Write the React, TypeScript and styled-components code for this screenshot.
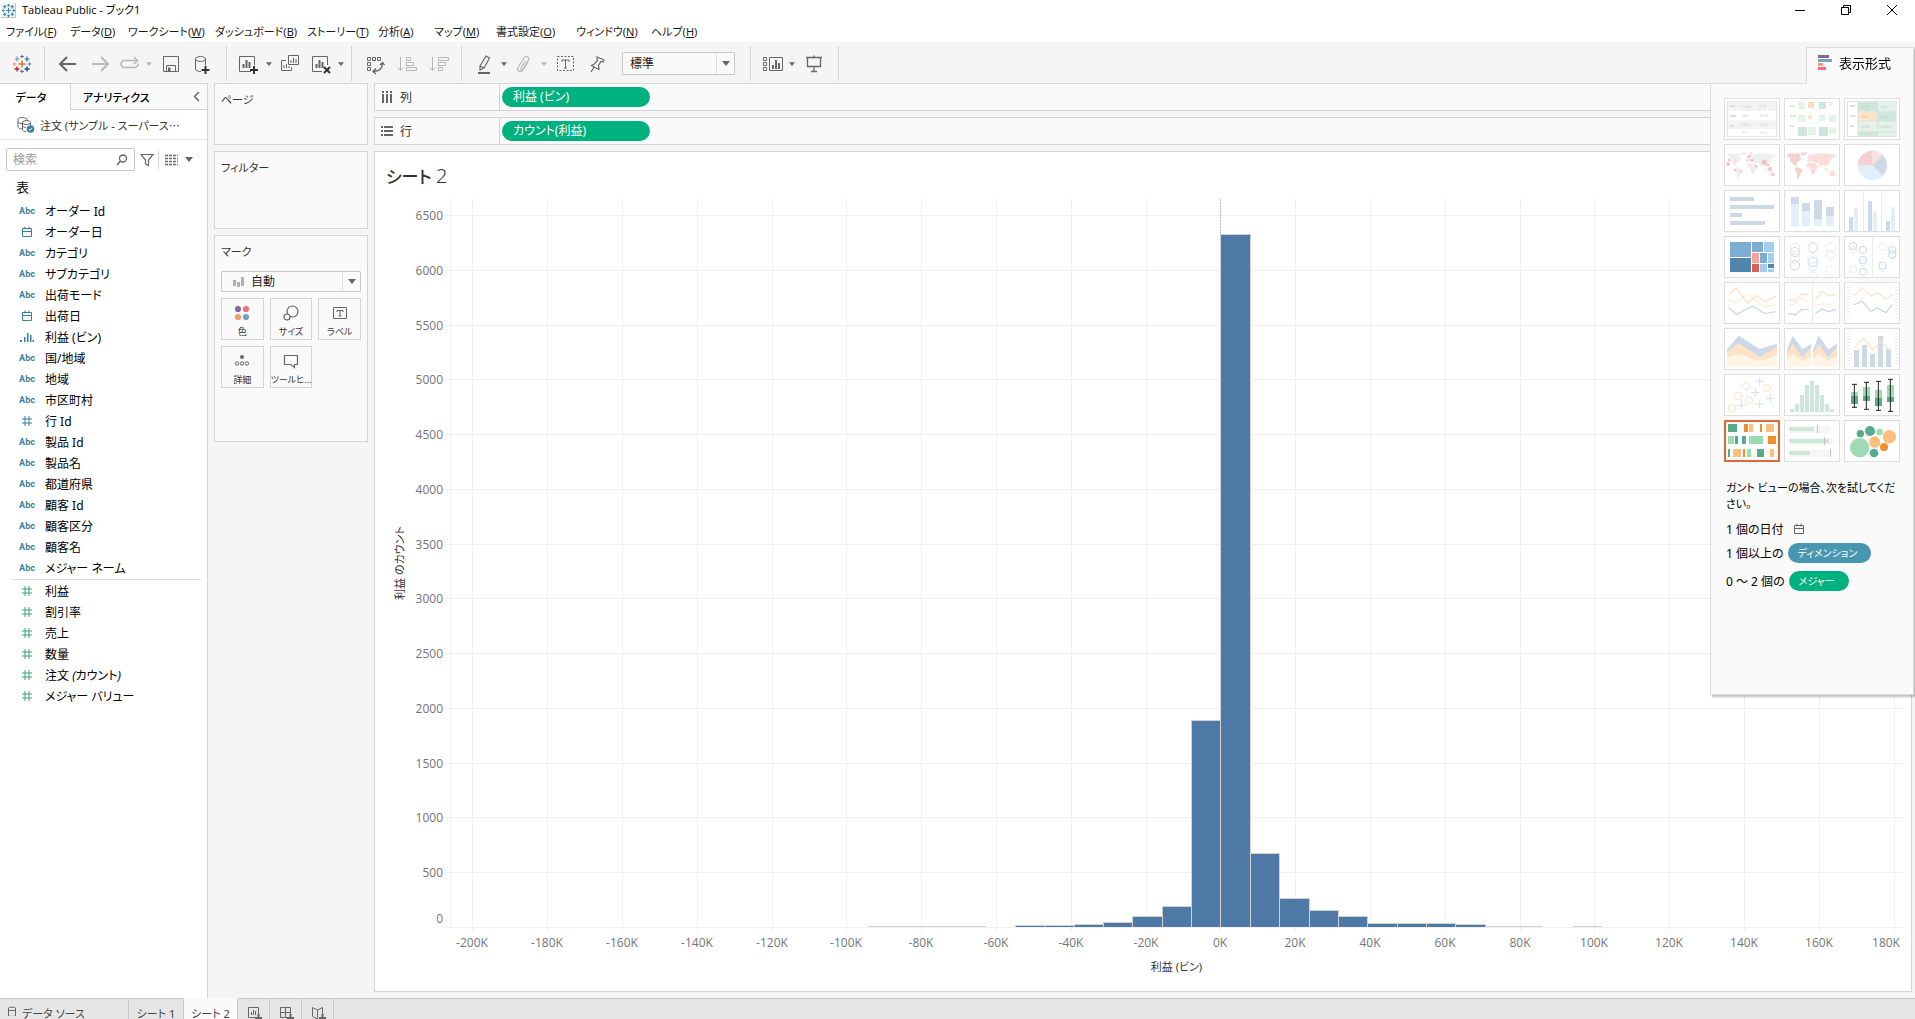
import React, { useLayoutEffect, useRef, useState } from "react";
import styled, { createGlobalStyle, css } from "styled-components";

const LINE = "#d4d4d4";
const INK = "#666666";
const PALE = "#b8b8b8";
const BLUE = "#3b7f9c";
const GREEN = "#3ba57b";

const GlobalStyle = createGlobalStyle`
  * { box-sizing: border-box; }
  html, body { margin: 0; }
  body, button, input, select {
    font-family: "Noto Sans", "Noto Sans CJK JP", sans-serif;
    font-size: 12px;
    font-feature-settings: "palt";
    color: #1a1a1a;
  }
  button, input, select { margin: 0; padding: 0; border: 0; background: none; border-radius: 0; }
  svg { display: block; flex: none; }
  h1, h2, p, ul { margin: 0; padding: 0; font-weight: 400; }
  ul { list-style: none; }
`;

const App_ = styled.div`
  position: relative;
  display: flex;
  flex-direction: column;
  height: 100vh;
  overflow: hidden;
  background: #f5f5f5;
`;

/* ---------- title and menu ---------- */

const TitleBar = styled.header`
  display: flex;
  align-items: center;
  gap: 6px;
  height: 20px;
  flex: none;
  padding-left: 1px;
  background: #fff;
`;
const WindowTitle = styled.span`
  flex: 1;
  font-family: "Open Sans", "Noto Sans CJK JP", sans-serif;
  font-size: 11px;
  line-height: 20px;
  color: #000;
`;
const WindowButtons = styled.div`
  display: flex;
`;
const WindowButton = styled.button`
  display: grid;
  place-items: center;
  width: 46px;
  height: 18px;
`;
const MenuBar = styled.nav`
  display: grid;
  grid-template-columns: 64px 58px 87px 92px 71px 56px 62px 80px 75px max-content;
  height: 22px;
  flex: none;
  padding: 2px 6px 0;
  background: #fff;
`;
const MenuButton = styled.button`
  font-size: 11px;
  line-height: 20px;
  text-align: left;
  white-space: nowrap;
`;

/* ---------- toolbar ---------- */

const Toolbar = styled.div`
  display: flex;
  align-items: stretch;
  height: 41px;
  flex: none;
  padding: 4px 0 2px;
`;
const ToolGroup = styled.div<{ $pad: number }>`
  display: flex;
  align-items: center;
  padding: 0 ${(p) => p.$pad}px;
  border-right: 1px solid ${LINE};
`;
const Tool = styled.button<{ $w: number }>`
  display: grid;
  place-items: center;
  width: ${(p) => p.$w}px;
  height: 32px;
`;

const SelectBox = styled.div<{ $w?: number; $h: number; $gap?: boolean }>`
  position: relative;
  width: ${(p) => (p.$w ? `${p.$w}px` : "auto")};
  height: ${(p) => p.$h}px;
  margin: ${(p) => (p.$gap ? "0 8px 0 11px" : "0")};
  border: 1px solid #c8c8c8;
  border-radius: 1px;
  background: #fafafa;
`;
const Select = styled.select<{ $indent: number }>`
  appearance: none;
  width: 100%;
  height: 100%;
  outline: none;
  padding-left: ${(p) => p.$indent}px;
`;
const SelectArrow = styled.span`
  position: absolute;
  top: 0;
  right: 0;
  bottom: 0;
  width: 18px;
  display: grid;
  place-items: center;
  border-left: 1px solid #e0e0e0;
  pointer-events: none;
`;
const SelectIcon = styled.span`
  position: absolute;
  left: 11px;
  top: 4px;
  pointer-events: none;
`;

/* ---------- body ---------- */

const Body = styled.div`
  display: grid;
  grid-template-columns: 208px 154px minmax(0, 1fr);
  flex: 1;
  min-height: 0;
`;
const DataPane = styled.aside`
  display: flex;
  flex-direction: column;
  background: #fff;
  border-right: 1px solid ${LINE};
`;
const PaneTabs = styled.div`
  display: flex;
  height: 27px;
  flex: none;
`;
const PaneTab = styled.button<{ $active?: boolean }>`
  width: ${(p) => (p.$active ? "70px" : "auto")};
  flex: ${(p) => (p.$active ? "none" : 1)};
  padding: ${(p) => (p.$active ? "0 8px 0 0" : "0 4px 0 12px")};
  display: flex;
  align-items: center;
  justify-content: ${(p) => (p.$active ? "center" : "space-between")};
  border-top: 1px solid ${LINE};
  ${(p) =>
    !p.$active &&
    css`
      border-left: 1px solid ${LINE};
      border-bottom: 1px solid ${LINE};
      background: #fafafa;
    `}
  font-size: 11px;
  font-weight: 500;
  color: #000;
`;
const SourceRow = styled.button`
  display: flex;
  align-items: center;
  gap: 5px;
  height: 30px;
  flex: none;
  padding: 0 4px 0 17px;
  border-bottom: 1px solid #e4e4e4;
  font-size: 11px;
  white-space: nowrap;
  color: #333;
`;
const SearchRow = styled.div`
  display: flex;
  align-items: center;
  padding: 8px 12px 0 6px;
  flex: none;
`;
const SearchField = styled.div`
  position: relative;
  width: 130px;
  height: 23px;
  border: 1px solid #c8c8c8;
  border-radius: 2px;
`;
const SearchInput = styled.input`
  width: 100%;
  height: 100%;
  padding: 0 24px 0 6px;
  outline: none;
  &::placeholder { color: #999; opacity: 1; }
`;
const SearchIcon = styled.span`
  position: absolute;
  right: 6px;
  top: 5px;
`;
const SmallButton = styled.button<{ $w: number; $rule?: boolean }>`
  display: grid;
  place-items: center;
  width: ${(p) => p.$w}px;
  height: 18px;
  border-left: ${(p) => (p.$rule ? `1px solid ${LINE}` : "0")};
`;
const TableHeading = styled.h2`
  padding: 7px 16px 4px;
  font-size: 13px;
  line-height: 18px;
  color: #000;
`;
const FieldList = styled.ul<{ $rule?: boolean }>`
  margin: 0 6px 0 13px;
  ${(p) =>
    p.$rule &&
    css`
      padding-bottom: 1px;
      border-bottom: 1px solid #dcdcdc;
    `}
`;
const Field = styled.li<{ $measure?: boolean }>`
  display: grid;
  grid-template-columns: 28px 1fr;
  gap: 4px;
  align-items: center;
  height: 21px;
  color: #000;
  & > :first-child {
    justify-self: center;
    color: ${(p) => (p.$measure ? GREEN : BLUE)};
  }
`;
const Abc = styled.span`
  font-family: Roboto, sans-serif;
  font-size: 9px;
  font-weight: 700;
`;

const CardColumn = styled.section`
  display: flex;
  flex-direction: column;
  gap: 6px;
  padding-left: 6px;
  margin-right: -6px;
`;
const Card = styled.div<{ $h: number }>`
  width: 154px;
  height: ${(p) => p.$h}px;
  border: 1px solid ${LINE};
  background: #fafafa;
  padding: 7px 6px 0;
`;
const CardTitle = styled.h2<{ $gap?: boolean }>`
  font-size: 11px;
  line-height: 18px;
  margin-bottom: ${(p) => (p.$gap ? 10 : 0)}px;
  color: #333;
`;
const MarkGrid = styled.div`
  display: grid;
  grid-template-columns: repeat(3, 1fr);
  gap: 6px;
  margin-top: 6px;
`;
const MarkButton = styled.button`
  display: flex;
  flex-direction: column;
  align-items: center;
  justify-content: space-between;
  height: 42px;
  padding: 6px 0 0;
  border: 1px solid ${LINE};
  background: #fafafa;
  font-size: 9px;
  line-height: 14px;
  white-space: nowrap;
  color: #333;
`;

const Workspace = styled.main`
  display: flex;
  flex-direction: column;
  gap: 6px;
  min-width: 0;
  padding: 0 3px 6px 12px;
`;
const Shelf = styled.div`
  display: grid;
  grid-template-columns: 125px 1fr;
  height: 28px;
  flex: none;
  border: 1px solid ${LINE};
  background: #fafafa;
`;
const ShelfLabel = styled.div`
  display: flex;
  align-items: center;
  gap: 7px;
  padding-left: 6px;
  border-right: 1px solid ${LINE};
  color: #333;
`;
const ShelfBody = styled.div`
  display: flex;
  align-items: center;
  padding-left: 2px;
`;
const Pill = styled.span<{ $w: number; $tone?: string; $small?: boolean }>`
  display: block;
  width: ${(p) => p.$w}px;
  height: 20px;
  line-height: 20px;
  padding-left: ${(p) => (p.$small ? 10 : 11)}px;
  border-radius: 10px;
  background: ${(p) => p.$tone ?? "#00b180"};
  font-size: ${(p) => (p.$small ? 10 : 12)}px;
  color: #fff;
  white-space: nowrap;
`;
const Sheet = styled.section`
  display: flex;
  flex-direction: column;
  flex: 1;
  min-height: 0;
  border: 1px solid ${LINE};
  background: #fff;
`;
const SheetTitle = styled.h1`
  height: 47px;
  padding: 10px 11px 0;
  font-size: 17px;
  font-weight: 500;
  line-height: 28px;
  color: #333;
  flex: none;
`;
const SheetNumber = styled.span`
  font-size: 20px;
  font-weight: 300;
`;
const ChartArea = styled.div`
  flex: 1;
  min-height: 0;
  min-width: 0;
  overflow: hidden;
`;
const TickText = styled.text`
  font-family: "Open Sans", sans-serif;
  font-size: 12px;
  fill: #757575;
`;
const AxisTitle = styled.text`
  font-size: 11px;
  fill: #333;
  text-anchor: middle;
`;

/* ---------- show me ---------- */

const ShowMe = styled.aside`
  position: absolute;
  top: 47px;
  right: 1px;
  width: 204px;
  display: flex;
  flex-direction: column;
  align-items: flex-end;
  filter: drop-shadow(2px 2px 1px rgba(0, 0, 0, 0.25));
`;
const ShowMeTab = styled.button`
  display: flex;
  align-items: center;
  gap: 6px;
  width: 108px;
  height: 37px;
  margin-bottom: -1px;
  padding: 0 0 7px 11px;
  border: 1px solid #dcdcdc;
  border-bottom: 0;
  background: #fafafa;
  font-size: 13px;
  color: #000;
  z-index: 1;
`;
const ShowMePanel = styled.div`
  width: 100%;
  height: 612px;
  padding: 14px 13px 0;
  border: 1px solid #dcdcdc;
  background: #fafafa;
`;
const ThumbGrid = styled.div`
  display: grid;
  grid-template-columns: repeat(3, 56px);
  gap: 4px;
`;
const Thumb = styled.button<{ $selected?: boolean }>`
  display: grid;
  place-items: center;
  width: 56px;
  height: 42px;
  background: #fff;
  border: 1px solid #dedede;
  ${(p) =>
    p.$selected &&
    css`
      outline: 2px solid #df6935;
      outline-offset: -2px;
      border-color: #df6935;
    `}
`;
const Hint = styled.p`
  padding: 18px 0 5px 2px;
  font-size: 11px;
  line-height: 16px;
  color: #000;
`;
const Requirement = styled.p<{ $h: number; $gap?: number }>`
  display: flex;
  align-items: center;
  gap: ${(p) => p.$gap ?? 4}px;
  height: ${(p) => p.$h}px;
  padding-left: 2px;
  color: #000;
`;

/* ---------- bottom tabs ---------- */

const BottomBar = styled.footer`
  display: flex;
  height: 21px;
  flex: none;
  overflow: hidden;
  background: #e6e6e6;
`;
const BottomTab = styled.button<{ $w: number; $active?: boolean }>`
  display: flex;
  justify-content: ${(p) => (p.$w > 100 ? "flex-start" : "center")};
  gap: 5px;
  width: ${(p) => p.$w}px;
  height: 30px;
  padding: 7px 0 0 ${(p) => (p.$w > 100 ? 7 : 0)}px;
  border-top: 1px solid ${(p) => (p.$active ? "#fafafa" : "#c8c8c8")};
  border-right: 1px solid #c8c8c8;
  background: ${(p) => (p.$active ? "#fafafa" : "#e6e6e6")};
  font-size: 11px;
  line-height: 15px;
  white-space: nowrap;
  color: #444;
`;
const BottomRest = styled.div`
  flex: 1;
  border-top: 1px solid #c8c8c8;
`;

/* ---------- icons ---------- */

type IconProps = { size?: number; color?: string; width?: number; children: React.ReactNode };
const Icon = ({ size = 24, color = INK, width = 1, children }: IconProps) => (
  <svg width={size} height={size} viewBox={`0 0 ${size} ${size}`} fill="none" stroke={color} strokeWidth={width} aria-hidden="true">
    {children}
  </svg>
);
const Caret = ({ color = INK, big = false }: { color?: string; big?: boolean }) => (
  <svg width={big ? 8 : 6} height={big ? 5 : 4} viewBox="0 0 8 5" aria-hidden="true">
    <path d="M0 0h8L4 5z" fill={color} />
  </svg>
);
const plus = (x: number, y: number, r: number, c: string, w = 1) => (
  <path key={`${x}-${y}`} d={`M${x - r} ${y}h${2 * r}M${x} ${y - r}v${2 * r}`} stroke={c} strokeWidth={w} />
);
const TableauMark = () => (
  <Icon size={20}>
    {plus(10, 10, 3.5, "#e8762d", 1.5)}
    {plus(5, 5, 2.5, "#6b9bb0", 1.2)}
    {plus(15, 5, 2.5, "#2f6f8f", 1.2)}
    {plus(5, 15, 2.5, "#c72035", 1.4)}
    {plus(15, 15, 2.5, "#1f447e", 1.4)}
    {plus(10, 2.5, 1.8, "#5b6591")}
    {plus(10, 17.5, 1.8, "#5b6591")}
    {plus(2.5, 10, 1.8, "#eb9a5a")}
    {plus(17.5, 10, 1.8, "#6b78a8")}
  </Icon>
);
const AppMark = () => (
  <svg width="15" height="15" viewBox="0 0 20 20" fill="none" aria-hidden="true">
    <rect width="20" height="20" fill="#f2f4f6" />
    <path d="M0 19.500h19.500V0" stroke="#aaa" />
    {[[10, 10, 3.2], [5, 5, 2.4], [15, 5, 2.4], [5, 15, 2.4], [15, 15, 2.4], [10, 3, 1.8], [10, 17, 1.8], [3, 10, 1.8], [17, 10, 1.8]].map(([x, y, r]) =>
      plus(x, y, r, "#3b86b5", 1.5)
    )}
  </svg>
);
const Calendar = ({ color = "currentColor" }: { color?: string }) => (
  <Icon size={12} color={color}>
    <path d="M1.500 2.500h9v8h-9zM1.500 5.500h9M4 0.500v3M8 0.500v3" />
  </Icon>
);
const Hash = () => (
  <Icon size={12} color="currentColor">
    <path d="M1 4h10M1 8h10M4 1v10M8 1v10" />
  </Icon>
);
const BinIcon = () => (
  <svg width="14" height="12" viewBox="0 0 14 12" fill="currentColor" aria-hidden="true">
    <path d="M0 9h2v2H0zM4 6h1.500v5H4zM7 2h1.500v9H7zM10 4h1.500v7H10zM12.500 9h1.500v2h-1.500z" />
  </svg>
);

const barsIn = <path d="M7.500 16v-4M10.500 16V8M13.500 16v-6" strokeWidth={2} />;
const icons = {
  back: (
    <Icon width={2}>
      <path d="M4 12h16M11 5l-7 7 7 7" />
    </Icon>
  ),
  forward: (
    <Icon width={2} color={PALE}>
      <path d="M4 12h16M13 5l7 7-7 7" />
    </Icon>
  ),
  redo: (
    <Icon color={PALE} width={1.5}>
      <path d="M11 15.500H6.500a3.500 3.500 0 0 1 0-7H19M16 5l3.500 3.500L16 12M20 11.500a3.500 3.500 0 0 1-3.500 4H10" />
    </Icon>
  ),
  save: (
    <Icon>
      <path d="M4.500 4.500h15v15h-15zM7.500 19v-5.500h9V19" />
      <path d="M9 15.500h2.500V19H9z" fill={INK} stroke="none" />
    </Icon>
  ),
  addData: (
    <Icon>
      <path d="M4.500 7v10c0 1.300 2.200 2.500 5.500 2.500M14.500 7v6.500M4.500 7c0-1.300 2-2.500 5-2.500s5 1.200 5 2.500-2 2.500-5 2.500-5-1.200-5-2.500z" />
      <path d="M14.500 14v8M10.500 18h8" stroke="#333" strokeWidth={2} />
    </Icon>
  ),
  newSheet: (
    <Icon>
      <path d="M15 19.500H3.500v-15h15V13" />
      {barsIn}
      <path d="M18 14v8M14 18h8" stroke="#333" strokeWidth={2} />
    </Icon>
  ),
  duplicate: (
    <Icon>
      <path d="M10.500 3.500h10v9h-10zM8 8.500H3.500v10h10V15M13 11V8M15.500 11V5.500M18 11V7M6 16v-3M8.500 16v-4M11 16v-2" />
    </Icon>
  ),
  clear: (
    <Icon>
      <path d="M13 19.500H3.500v-15h15V13" />
      {barsIn}
      <path d="M15 15l6 6M21 15l-6 6" stroke="#333" strokeWidth={2} />
    </Icon>
  ),
  swap: (
    <Icon>
      <path d="M4.500 5.500h3v3h-3zM9.500 5.500h3v3h-3zM14.500 5.500h3v3h-3zM4.500 10.500h3v3h-3zM4.500 15.500h3v3h-3z" />
      <path d="M10 19.500c6 0 9.500-3 9.500-8.500M13 16.500l-3 3 3 2.500M17 13l2.500-2.500L21.500 13" strokeWidth={1.300} />
    </Icon>
  ),
  sortAsc: (
    <Icon color={PALE}>
      <path d="M5.500 5v13M3 15.500l2.500 3 2.500-3M11.500 5.500h4v3h-4zM11.500 10.500h7v3h-7zM11.500 15.500h10v3h-10z" />
    </Icon>
  ),
  sortDesc: (
    <Icon color={PALE}>
      <path d="M5.500 5v13M3 15.500l2.500 3 2.500-3M11.500 5.500h10v3h-10zM11.500 10.500h7v3h-7zM11.500 15.500h4v3h-4z" />
    </Icon>
  ),
  highlight: (
    <Icon width={1.200}>
      <path d="M8 14l6-10 3.500 2L12 16l-4 2zM8 14l4 2" />
      <path d="M6 21h12" strokeWidth={2} />
    </Icon>
  ),
  clip: (
    <Icon color={PALE} width={1.200}>
      <path d="M16 10l-5 8c-2.500 3-6.500.500-5-2.500l6-9.500c2-3 6-1 4.500 2L11 17c-1.200 1.500-2.800.500-2-1l4.500-7" />
    </Icon>
  ),
  label: (
    <Icon>
      <rect x="3.500" y="4.500" width="16" height="14" strokeDasharray="2 1.500" />
      <path d="M8 10V8h7v2M11.500 8v8M10 16h3" />
    </Icon>
  ),
  pin: (
    <Icon width={1.200}>
      <path d="M12 5l7 3-1 2-2-.500-2.500 4 .500 4-3-1.500-4.500-2.500 3-1.500 3-3.500zM9.500 14.500L6 20" />
    </Icon>
  ),
  cards: (
    <Icon>
      <path d="M2.500 5.500h3v3h-3zM2.500 10.500h3v3h-3zM2.500 15.500h3v3h-3zM8.500 5.500h13v13h-13z" />
      <path d="M12 17v-4M15 17V8M18 17v-6" strokeWidth={2} />
    </Icon>
  ),
  present: (
    <Icon width={1.300}>
      <path d="M4 5.500h16M5.500 6v8.500h13V6M12 14.500v5M9 19.500h6M12 3.500v2" />
    </Icon>
  ),
};

/* ---------- histogram ---------- */

// Bin index (multiples of the bin width from zero) and record count.
const BIN = 7.85;
const BINS: [number, number][] = [
  [-12, 3], [-11, 3], [-10, 3], [-9, 3], [-7, 18], [-6, 18], [-5, 28], [-4, 45], [-3, 100], [-2, 192], [-1, 1890],
  [0, 6330], [1, 675], [2, 265], [3, 157], [4, 100], [5, 37], [6, 37], [7, 37], [8, 28], [9, 3], [10, 3], [12, 3],
];
const X_MIN = -206;
const X_MAX = 182.5;
const Y_MAX = 6648;

function Histogram() {
  const ref = useRef<HTMLDivElement>(null);
  const [size, setSize] = useState({ w: 1536, h: 792 });
  useLayoutEffect(() => {
    const el = ref.current;
    if (!el) return;
    const measure = () => setSize({ w: el.clientWidth, h: el.clientHeight });
    measure();
    const observer = new ResizeObserver(measure);
    observer.observe(el);
    return () => observer.disconnect();
  }, []);
  const left = 75;
  const right = size.w - 8;
  const bottom = size.h - 64;
  const x = (v: number) => Math.round(left + ((v - X_MIN) / (X_MAX - X_MIN)) * (right - left));
  const y = (v: number) => Math.round(bottom - (v / Y_MAX) * bottom);
  const xs = Array.from({ length: 20 }, (_, i) => -200 + i * 20);
  const ys = Array.from({ length: 14 }, (_, i) => i * 500);
  return (
    <ChartArea ref={ref}>
      <svg width={size.w} height={size.h} role="img" aria-label="利益 (ビン) ヒストグラム">
        <g stroke="#f0f0f0" shapeRendering="crispEdges">
          <line x1={left} x2={left} y1={0} y2={bottom} />
          {xs.map((v) => (
            <line key={v} x1={x(v)} x2={x(v)} y1={0} y2={bottom + 5} />
          ))}
          {ys.map((v) => (
            <line key={v} x1={left - 5} x2={right} y1={y(v)} y2={y(v)} />
          ))}
        </g>
        <line x1={x(0) + 0.5} x2={x(0) + 0.5} y1={0} y2={y(6330)} stroke="#bdbdbd" strokeDasharray="2 1" />
        <g fill="#4e79a7" stroke="#d2d2d2" shapeRendering="crispEdges">
          {BINS.map(([i, n]) => {
            const x0 = x(i * BIN);
            const x1 = x((i + 1) * BIN);
            const top = Math.min(y(n), bottom - 1);
            return n > 5 ? (
              <path key={i} d={`M${x0} ${bottom}V${top}H${x1}V${bottom}`} />
            ) : (
              <line key={i} x1={x0} x2={x1} y1={top} y2={top} />
            );
          })}
        </g>
        {ys.map((v) => (
          <TickText key={v} x={left - 7} y={v === 0 ? bottom - 4 : y(v) + 5} textAnchor="end">
            {v}
          </TickText>
        ))}
        {xs.map((v) => (
          <TickText key={v} x={Math.min(x(v), right - 17)} y={bottom + 20} textAnchor="middle">
            {v}K
          </TickText>
        ))}
        <AxisTitle x={(left + right) / 2} y={bottom + 44}>
          利益 (ビン)
        </AxisTitle>
        <AxisTitle transform={`translate(29 ${bottom / 2}) rotate(-90)`}>利益 のカウント</AxisTitle>
      </svg>
    </ChartArea>
  );
}

/* ---------- chart type drawings ---------- */

// All drawings share one sheet: cells are 162 x 120 units, 180 apart across and 138 apart down;
// the second half of the sheet restarts at y = 99.
const Drawing = ({ col, row, children }: { col: number; row: number; children: React.ReactNode }) => (
  <svg
    width="54"
    height="40"
    viewBox={`${75 + 180 * col} ${row < 4 ? 297 + 138 * row : 99 + 138 * (row - 4)} 162 120`}
    fill="none"
    aria-hidden="true"
  >
    {children}
  </svg>
);
const R = ({ b, f }: { b: number[][]; f: string }) => (
  <g fill={f}>
    {b.map(([x, y, w, h], i) => (
      <rect key={i} x={x} y={y} width={w} height={h} />
    ))}
  </g>
);
const Rings = ({ c, p, r = 14 }: { c: string; p: number[][]; r?: number }) => (
  <g stroke={c} strokeWidth="3">
    {p.map(([x, y], i) => (
      <circle key={i} cx={x} cy={y} r={r} />
    ))}
  </g>
);
const Dots = ({ c, p }: { c: string; p: number[][] }) => (
  <g fill={c}>
    {p.map(([x, y, r], i) => (
      <circle key={i} cx={x} cy={y} r={r} />
    ))}
  </g>
);
const WORLD_WEST =
  "M2 8L10 3L28 4L36 2L44 8L40 14L48 18L40 25L34 30L30 36L34 42L26 40L18 32L13 26L12 16L4 14ZM42 1L64 0L58 8L50 12ZM30 44L42 47L51 54L44 64L40 72L37 82L33 75L32 62L27 52Z";
const WORLD_EAST =
  "M66 20L64 12L72 6L84 6L100 2L120 4L150 7L148 14L136 19L132 30L126 36L118 45L112 37L104 43L98 33L88 34L84 28L74 26L64 28ZM62 34L72 30L88 34L97 42L90 54L84 66L78 68L74 56L70 46L62 44ZM130 58L142 54L150 64L146 72L130 70ZM116 46L128 52L126 56L116 52Z";
const tiny = { fontSize: 14, fontFamily: "Liberation Serif" };

const PB = "#ccd9e6";
const LB = "#e2effa";
const PG = "#cde7dc";
const LG = "#e2f3ea";
const PO = "#fde3c8";
const YO = "#fdf0d8";

const drawings: { name: string; art: React.ReactNode }[] = [
  {
    name: "テキスト表",
    art: (
      <>
        <rect x="82" y="304" width="148" height="106" stroke="#e4e4e4" strokeWidth="3" />
        <R f="#f3f3f3" b={[[84, 306, 144, 27], [84, 361, 144, 26]]} />
        <R f="#dedede" b={[[90, 315, 15, 6], [90, 345, 18, 6], [90, 375, 12, 6]]} />
        <g fill="#cfcfcf" {...tiny}>
          <text x="124" y="325">1234</text><text x="177" y="325">678</text>
          <text x="124" y="352">368</text><text x="177" y="352">3034</text>
          <text x="124" y="379">2620</text><text x="177" y="379">2550</text>
          <text x="124" y="403">971</text><text x="177" y="403">322</text>
        </g>
      </>
    ),
  },
  {
    name: "ヒートマップ",
    art: (
      <>
        <R f="#e4e4e4" b={[[270, 315, 15, 6], [270, 345, 18, 6], [270, 375, 12, 6]]} />
        <R f={LG} b={[[294, 306, 21, 21], [387, 306, 12, 12], [294, 345, 21, 21], [357, 345, 18, 18], [387, 345, 21, 21], [324, 381, 24, 24], [387, 381, 21, 21]]} />
        <R f={PG} b={[[357, 306, 21, 21], [294, 381, 27, 27], [357, 381, 27, 27]]} />
        <R f="#fcdcc0" b={[[324, 306, 18, 18]]} />
        <R f={PO} b={[[324, 345, 12, 12]]} />
      </>
    ),
  },
  {
    name: "ハイライト表",
    art: (
      <>
        <rect x="442" y="304" width="146" height="106" stroke="#dedede" strokeWidth="3" />
        <R f="#e0e0e0" b={[[450, 315, 15, 6], [450, 345, 18, 6], [450, 375, 12, 6]]} />
        <R f={PG} b={[[475, 306, 57, 27], [534, 336, 54, 27], [475, 396, 57, 12]]} />
        <R f={LG} b={[[534, 306, 54, 27], [475, 366, 57, 27], [534, 366, 54, 27], [534, 396, 54, 12]]} />
        <R f={PO} b={[[475, 336, 57, 27]]} />
        <path d="M474 304v106M533 304v106M474 334h114M474 364h114M474 395h114" stroke="#c8d4ce" strokeWidth="2" />
        <g fill="#bccbc3" {...tiny}>
          <text x="481" y="323">1234</text><text x="540" y="323">546</text>
          <text x="481" y="355">368</text><text x="540" y="355">340</text>
          <text x="481" y="385">2620</text><text x="538" y="385">51890</text>
        </g>
      </>
    ),
  },
  {
    name: "記号マップ",
    art: (
      <>
        <g transform="translate(78 457)" fill="#efefef">
          <path d={WORLD_WEST} />
          <path d={WORLD_EAST} />
        </g>
        <Dots c="#efc4c8" p={[[84, 492, 6], [87, 480, 4], [147, 469, 5], [156, 481, 5], [193, 487, 8], [204, 495, 4], [105, 510, 4], [168, 499, 4], [210, 507, 6], [219, 525, 4]]} />
        <Dots c="#fbd9d9" p={[[106, 482, 5], [142, 480, 5], [123, 514, 5], [153, 460, 4]]} />
      </>
    ),
  },
  {
    name: "マップ",
    art: (
      <g transform="translate(258 457)">
        <path d={WORLD_WEST} fill="#f5d0d0" />
        <path d={WORLD_EAST} fill="#fddcdc" />
      </g>
    ),
  },
  {
    name: "円グラフ",
    art: (
      <>
        <circle cx="517" cy="496" r="44" fill={LB} />
        <path d="M517 496V452A44 44 0 0 0 473 496Z" fill="#f5d0d0" />
        <path d="M517 496V452A44 44 0 0 1 548 465Z" fill="#fde0e0" />
        <path d="M517 496L548 465A44 44 0 0 1 548 527Z" fill={PB} />
      </>
    ),
  },
  { name: "水平棒", art: <R f={PB} b={[[90, 591, 72, 12], [90, 615, 132, 12], [90, 639, 36, 12], [90, 663, 105, 12]]} /> },
  {
    name: "積み上げ棒",
    art: (
      <>
        <R f={LB} b={[[273, 612, 24, 66], [306, 633, 24, 45], [342, 657, 24, 21], [378, 648, 24, 30]]} />
        <R f={PB} b={[[273, 591, 24, 21], [306, 609, 24, 24], [342, 600, 24, 57], [378, 621, 24, 27]]} />
      </>
    ),
  },
  {
    name: "並列棒",
    art: (
      <>
        <R f="#ececec" b={[[489, 573, 3, 120], [543, 573, 3, 120]]} />
        <R f={PB} b={[[447, 651, 12, 42], [504, 603, 12, 90], [558, 663, 12, 30]]} />
        <R f={LB} b={[[462, 624, 12, 69], [519, 636, 12, 57], [573, 621, 12, 72]]} />
      </>
    ),
  },
  {
    name: "ツリーマップ",
    art: (
      <>
        <R f="#7eadd2" b={[[90, 726, 63, 45], [156, 726, 33, 30], [180, 759, 21, 30]]} />
        <R f="#5085ae" b={[[90, 774, 63, 42], [204, 792, 18, 12]]} />
        <R f="#a3cfef" b={[[192, 726, 30, 30], [204, 759, 18, 30], [180, 792, 21, 24], [204, 807, 18, 9]]} />
        <R f="#ff9f97" b={[[156, 759, 21, 30]]} />
        <R f="#e15f59" b={[[156, 792, 21, 24]]} />
      </>
    ),
  },
  {
    name: "円ビュー",
    art: (
      <>
        <Rings c={LB} p={[[285, 743], [392, 743], [392, 765], [285, 776], [338, 776], [338, 830], [392, 812]]} />
        <Rings c={PB} p={[[285, 756], [338, 743], [285, 796], [338, 786]]} />
        <Rings c={LB} p={[[338, 799]]} />
      </>
    ),
  },
  {
    name: "並列円",
    art: (
      <>
        <R f="#ececec" b={[[516, 711, 3, 120]]} />
        <Rings r={11} c={LB} p={[[459, 750], [548, 740], [577, 762], [489, 786], [459, 808], [548, 804]]} />
        <Rings r={11} c={PB} p={[[459, 738], [489, 750], [577, 750], [489, 780], [489, 815], [548, 797], [577, 764]]} />
      </>
    ),
  },
  {
    name: "折れ線 (連続)",
    art: (
      <g strokeWidth="4">
        <path d="M86 149L109 158L143 132L194 171L227 165" stroke={YO} />
        <path d="M89 131L109 114L143 159L171 136L194 155L227 139" stroke={PO} />
        <path d="M86 172L109 194L157 168L194 191L227 185" stroke={PB} />
      </g>
    ),
  },
  {
    name: "折れ線 (不連続)",
    art: (
      <g strokeWidth="4">
        <path d="M338 99v120" stroke="#e8e8e8" strokeWidth="3" />
        <path d="M264 167L284 162L305 143L327 157M346 167L367 161L386 165L408 155" stroke={YO} />
        <path d="M264 149L286 153L305 132L327 133M347 148L367 124L386 138L408 133" stroke={PO} />
        <path d="M264 190L286 195L305 179L327 178M346 190L367 177L386 185L408 178" stroke={PB} />
      </g>
    ),
  },
  {
    name: "二重折れ線",
    art: (
      <g strokeWidth="4">
        <path d="M445 111v92M590 111v92" stroke="#e8e8e8" strokeWidth="8" strokeDasharray="3 6" />
        <path d="M460 139L487 115L513 138L531 128L558 147L577 133" stroke={PO} />
        <path d="M460 165L487 154L513 184L531 174L558 188L577 164" stroke={PB} />
      </g>
    ),
  },
  {
    name: "面グラフ (連続)",
    art: (
      <>
        <path d="M81 298L116 257L179 297L231 281V351H81Z" fill={PB} />
        <path d="M81 306L116 280L179 321L231 290V351H81Z" fill={PO} />
        <path d="M81 320L116 312L179 333L231 317V351H81Z" fill="#fef4e6" />
      </>
    ),
  },
  {
    name: "面グラフ (不連続)",
    art: (
      <>
        <path d="M261 300L278 257L307 298L333 281V351H261ZM339 300L356 257L385 298L411 281V351H339Z" fill={PB} />
        <path d="M261 310L278 281L307 322L333 291V351H261ZM339 310L356 281L385 322L411 291V351H339Z" fill={PO} />
        <path d="M261 325L278 312L307 333L333 317V351H261ZM339 325L356 312L385 333L411 317V351H339Z" fill="#fef4e6" />
      </>
    ),
  },
  {
    name: "二重組み合わせ",
    art: (
      <>
        <path d="M445 249v100M590 249v100" stroke="#e8e8e8" strokeWidth="8" strokeDasharray="3 6" />
        <R f={PB} b={[[462, 300, 15, 51], [486, 285, 15, 66], [510, 312, 15, 39], [534, 258, 15, 93], [558, 297, 15, 54]]} />
        <path d="M465 291L491 264L517 300L543 275L571 302" stroke={PO} strokeWidth="4" />
      </>
    ),
  },
  {
    name: "散布図",
    art: (
      <>
        <Rings r={11} c={PO} p={[[138, 408], [201, 414], [114, 438], [147, 450], [96, 474]]} />
        {[[179, 394], [166, 427], [211, 445], [179, 463], [124, 466]].map(([x, y]) => plus(x, y, 13, "#cfe5dc", 3))}
      </>
    ),
  },
  {
    name: "ヒストグラム",
    art: (
      <R f={PG} b={[[270, 477, 12, 9], [285, 462, 12, 24], [300, 435, 12, 51], [315, 405, 12, 81], [330, 393, 12, 93], [345, 405, 12, 81], [360, 435, 12, 51], [375, 462, 12, 24], [390, 477, 12, 9]]} />
    ),
  },
  {
    name: "箱ヒゲ図",
    art: (
      <>
        <R f="#9ddbb5" b={[[453, 426, 21, 12], [489, 411, 21, 27], [525, 420, 21, 24], [561, 405, 21, 36]]} />
        <R f="#57ad8b" b={[[453, 438, 21, 24], [489, 438, 21, 15], [525, 444, 21, 24], [561, 441, 21, 15]]} />
        <path
          d="M463 403v69M456 403h15M456 472h15M499 397v81M492 397h15M492 478h15M535 394v87M528 394h15M528 481h15M571 388v96M564 388h15M564 484h15"
          stroke="#222"
          strokeWidth="3"
        />
      </>
    ),
  },
  {
    name: "ガント ビュー",
    art: (
      <>
        <R f="#57ad8b" b={[[84, 522, 27, 24], [105, 558, 9, 24], [126, 558, 12, 24], [84, 597, 6, 24], [171, 597, 21, 24]]} />
        <R f="#9ddbb5" b={[[84, 558, 18, 24], [147, 558, 42, 24], [141, 597, 12, 24]]} />
        <R f="#f28e2b" b={[[132, 522, 12, 24], [180, 522, 6, 24], [204, 558, 24, 24], [129, 597, 6, 24]]} />
        <R f="#ffbe7d" b={[[147, 522, 12, 24], [198, 522, 24, 24], [99, 597, 24, 24], [210, 597, 12, 24]]} />
      </>
    ),
  },
  {
    name: "ブレット グラフ",
    art: (
      <>
        <R f="#f6f6f6" b={[[267, 528, 123, 21], [267, 564, 135, 21], [267, 600, 120, 21]]} />
        <R f={PG} b={[[267, 531, 75, 12], [267, 567, 120, 12], [267, 603, 63, 12]]} />
        <R f="#c0c0c0" b={[[351, 525, 3, 24], [372, 561, 3, 24], [390, 597, 3, 24]]} />
      </>
    ),
  },
  {
    name: "バブル チャート",
    art: (
      <>
        <Dots c="#9ddbb5" p={[[479, 593, 29], [539, 546, 10]]} />
        <Dots c="#57ad8b" p={[[481, 551, 11], [510, 543, 15], [522, 609, 13]]} />
        <Dots c="#ffbe7d" p={[[524, 576, 17], [568, 560, 20]]} />
        <Dots c="#f28e2b" p={[[552, 591, 12]]} />
      </>
    ),
  },
];

/* ---------- content ---------- */

const MENUS: [string, string][] = [
  ["ファイル", "F"], ["データ", "D"], ["ワークシート", "W"], ["ダッシュボード", "B"], ["ストーリー", "T"],
  ["分析", "A"], ["マップ", "M"], ["書式設定", "O"], ["ウィンドウ", "N"], ["ヘルプ", "H"],
];

type Kind = "abc" | "date" | "bin" | "num";
const DIMENSIONS: [Kind, string][] = [
  ["abc", "オーダー Id"], ["date", "オーダー日"], ["abc", "カテゴリ"], ["abc", "サブカテゴリ"], ["abc", "出荷モード"],
  ["date", "出荷日"], ["bin", "利益 (ビン)"], ["abc", "国/地域"], ["abc", "地域"], ["abc", "市区町村"], ["num", "行 Id"],
  ["abc", "製品 Id"], ["abc", "製品名"], ["abc", "都道府県"], ["abc", "顧客 Id"], ["abc", "顧客区分"], ["abc", "顧客名"],
  ["abc", "メジャー ネーム"],
];
const MEASURES: { id: string; name: React.ReactNode }[] = [
  { id: "profit", name: "利益" },
  { id: "discount", name: "割引率" },
  { id: "sales", name: "売上" },
  { id: "quantity", name: "数量" },
  { id: "count", name: <>注文 <i>(</i>カウント<i>)</i></> },
  { id: "values", name: "メジャー バリュー" },
];

const KindIcon = ({ kind }: { kind: Kind }) => {
  if (kind === "abc") return <Abc>Abc</Abc>;
  if (kind === "date") return <Calendar />;
  if (kind === "bin") return <BinIcon />;
  return <Hash />;
};

const MARKS: { label: string; icon: React.ReactNode }[] = [
  {
    label: "色",
    icon: (
      <svg width="16" height="16" viewBox="0 0 16 16" aria-hidden="true">
        <circle cx="4" cy="4" r="3.100" fill="#85689a" />
        <circle cx="12" cy="4" r="3.100" fill="#f76c7c" />
        <circle cx="4" cy="12" r="3.100" fill="#f2a072" />
        <circle cx="12" cy="12" r="3.100" fill="#7c9fcb" />
      </svg>
    ),
  },
  { label: "サイズ", icon: <Icon size={16} width={1.200}><circle cx="9.500" cy="6.500" r="5.500" /><circle cx="4" cy="12" r="3" fill="#fafafa" /></Icon> },
  { label: "ラベル", icon: <Icon size={16}><path d="M1.500 2.500h13v11h-13zM5 7V5.500h6V7M8 5.500V11M6.500 11h3" /></Icon> },
  { label: "詳細", icon: <Icon size={16}><circle cx="8" cy="4" r="2" fill={INK} stroke="none" /><circle cx="3" cy="10.500" r="1.700" /><circle cx="8" cy="10.500" r="1.700" /><circle cx="13" cy="10.500" r="1.700" /></Icon> },
  { label: "ツールヒ…", icon: <Icon size={16} width={1.200}><path d="M1.500 2.500h13v9h-3v3l-3.500-3H1.500z" /></Icon> },
];

const Dropdown = ({ pale = false }: { pale?: boolean }) => (
  <Tool $w={10} aria-label="メニュー">
    <Caret color={pale ? PALE : INK} />
  </Tool>
);

export default function App() {
  return (
    <App_>
      <GlobalStyle />
      <TitleBar>
        <AppMark />
        <WindowTitle>Tableau Public - ブック1</WindowTitle>
        <WindowButtons>
          <WindowButton aria-label="最小化">
            <Icon size={12} color="#000"><path d="M1 6.500h10" /></Icon>
          </WindowButton>
          <WindowButton aria-label="元に戻す">
            <Icon size={12} color="#000"><path d="M1.500 3.500h7v7h-7zM3.500 3.500v-2h7v7h-2" /></Icon>
          </WindowButton>
          <WindowButton aria-label="閉じる">
            <Icon size={12} color="#000"><path d="M1 1l10 10M11 1L1 11" /></Icon>
          </WindowButton>
        </WindowButtons>
      </TitleBar>

      <MenuBar>
        {MENUS.map(([name, key]) => (
          <MenuButton key={key}>
            {name}(<u>{key}</u>)
          </MenuButton>
        ))}
      </MenuBar>

      <Toolbar>
        <ToolGroup $pad={6}>
          <Tool $w={32} aria-label="スタート ページ"><TableauMark /></Tool>
        </ToolGroup>
        <ToolGroup $pad={7}>
          <Tool $w={32} aria-label="元に戻す">{icons.back}</Tool>
          <Tool $w={32} aria-label="やり直す">{icons.forward}</Tool>
          <Tool $w={28} aria-label="再実行">{icons.redo}</Tool>
          <Dropdown pale />
          <Tool $w={33} aria-label="保存">{icons.save}</Tool>
          <Tool $w={32} aria-label="新しいデータ ソース">{icons.addData}</Tool>
        </ToolGroup>
        <ToolGroup $pad={5}>
          <Tool $w={32} aria-label="新しいワークシート">{icons.newSheet}</Tool>
          <Dropdown />
          <Tool $w={32} aria-label="複製">{icons.duplicate}</Tool>
          <Tool $w={30} aria-label="クリア">{icons.clear}</Tool>
          <Dropdown />
        </ToolGroup>
        <ToolGroup $pad={6}>
          <Tool $w={33} aria-label="行と列の交換">{icons.swap}</Tool>
          <Tool $w={32} aria-label="昇順">{icons.sortAsc}</Tool>
          <Tool $w={32} aria-label="降順">{icons.sortDesc}</Tool>
        </ToolGroup>
        <ToolGroup $pad={7}>
          <Tool $w={30} aria-label="ハイライト">{icons.highlight}</Tool>
          <Dropdown />
          <Tool $w={30} aria-label="グループ">{icons.clip}</Tool>
          <Dropdown pale />
          <Tool $w={34} aria-label="マーク ラベルの表示">{icons.label}</Tool>
          <Tool $w={28} aria-label="固定">{icons.pin}</Tool>
          <SelectBox $w={113} $h={23} $gap>
            <Select aria-label="適合" $indent={7} defaultValue="標準">
              <option>標準</option>
            </Select>
            <SelectArrow><Caret big /></SelectArrow>
          </SelectBox>
        </ToolGroup>
        <ToolGroup $pad={8}>
          <Tool $w={28} aria-label="カードの表示">{icons.cards}</Tool>
          <Dropdown />
          <Tool $w={33} aria-label="プレゼンテーション">{icons.present}</Tool>
        </ToolGroup>
      </Toolbar>

      <Body>
        <DataPane>
          <PaneTabs>
            <PaneTab $active>データ</PaneTab>
            <PaneTab>
              アナリティクス
              <Icon size={10} width={1.500}><path d="M6 0L1.500 4.500 6 9" /></Icon>
            </PaneTab>
          </PaneTabs>
          <SourceRow>
            <svg width="18" height="18" viewBox="0 0 18 18" fill="none" stroke={INK} aria-hidden="true">
              <path d="M10 5V3.500C10 2.300 8 1.500 5.500 1.500S1 2.300 1 3.500v7C1 12 3 13 5 13M1 6c1 1.300 2.500 1.500 4 1.500" />
              <ellipse cx="9.500" cy="6.500" rx="4" ry="2" />
              <path d="M5.500 6.500v7c0 1.200 1.500 2 3.500 2.200M13.500 6.500V9M5.500 10c1 1 2 1.400 3.500 1.500" />
              <circle cx="13.500" cy="13" r="3.800" fill={BLUE} stroke="none" />
              <path d="M11.800 13l1.200 1.300 2.200-2.500" stroke="#fff" />
            </svg>
            <span>注文 (サンプル - スーパース⋯</span>
          </SourceRow>
          <SearchRow>
            <SearchField>
              <SearchInput aria-label="検索" placeholder="検索" />
              <SearchIcon>
                <Icon size={12} width={1.300}><circle cx="7" cy="4.500" r="3.500" /><path d="M4.500 7L1 11" /></Icon>
              </SearchIcon>
            </SearchField>
            <SmallButton $w={23} aria-label="フィルター">
              <Icon size={14} width={1.200}><path d="M1 1.500h12L8.500 7v5.500l-3-1.500V7z" /></Icon>
            </SmallButton>
            <SmallButton $w={25} $rule aria-label="表示">
              <Icon size={13}><path d="M0 2.500h13M0 5.500h13M0 8.500h13M0 11.500h13" strokeDasharray="3 1" strokeWidth={1.400} /></Icon>
            </SmallButton>
            <SmallButton $w={12} aria-label="オプション"><Caret big /></SmallButton>
          </SearchRow>
          <TableHeading>表</TableHeading>
          <FieldList $rule>
            {DIMENSIONS.map(([kind, name]) => (
              <Field key={name}>
                <KindIcon kind={kind} />
                <span>{name}</span>
              </Field>
            ))}
          </FieldList>
          <FieldList>
            {MEASURES.map((m) => (
              <Field key={m.id} $measure>
                <Hash />
                <span>{m.name}</span>
              </Field>
            ))}
          </FieldList>
        </DataPane>

        <CardColumn>
          <Card $h={62}><CardTitle>ページ</CardTitle></Card>
          <Card $h={78}><CardTitle>フィルター</CardTitle></Card>
          <Card $h={207}>
            <CardTitle $gap>マーク</CardTitle>
            <SelectBox $h={21}>
              <SelectIcon>
                <svg width="12" height="11" viewBox="0 0 12 11" fill="#b0b0b0" aria-hidden="true">
                  <path d="M0 4h3v6H0zM4 6h3v5H4zM8 1h3v9H8z" />
                </svg>
              </SelectIcon>
              <Select aria-label="マーク タイプ" $indent={29} defaultValue="自動">
                <option>自動</option>
              </Select>
              <SelectArrow><Caret big /></SelectArrow>
            </SelectBox>
            <MarkGrid>
              {MARKS.map((m) => (
                <MarkButton key={m.label}>
                  {m.icon}
                  <span>{m.label}</span>
                </MarkButton>
              ))}
            </MarkGrid>
          </Card>
        </CardColumn>

        <Workspace>
          <Shelf>
            <ShelfLabel>
              <svg width="12" height="12" viewBox="0 0 12 12" fill={INK} aria-hidden="true">
                <path d="M1 0h2v2H1zM5 0h2v2H5zM9 0h2v2H9zM1 3h2v9H1zM5 3h2v9H5zM9 3h2v9H9z" />
              </svg>
              列
            </ShelfLabel>
            <ShelfBody><Pill $w={148}>利益 (ビン)</Pill></ShelfBody>
          </Shelf>
          <Shelf>
            <ShelfLabel>
              <svg width="12" height="12" viewBox="0 0 12 12" fill={INK} aria-hidden="true">
                <path d="M0 1h2v2H0zM0 5h2v2H0zM0 9h2v2H0zM3 1h9v2H3zM3 5h9v2H3zM3 9h9v2H3z" />
              </svg>
              行
            </ShelfLabel>
            <ShelfBody><Pill $w={148}>カウント(利益)</Pill></ShelfBody>
          </Shelf>
          <Sheet>
            <SheetTitle>
              シート <SheetNumber>2</SheetNumber>
            </SheetTitle>
            <Histogram />
          </Sheet>
        </Workspace>
      </Body>

      <BottomBar>
        <BottomTab $w={129}>
          <Icon size={10}><path d="M1.500 2v8c0 .500 7 .500 7 0V2c0-1-7-1-7 0zM1.500 4.500h7" /></Icon>
          データ ソース
        </BottomTab>
        <BottomTab $w={55}>シート 1</BottomTab>
        <BottomTab $w={54} $active>シート 2</BottomTab>
        <BottomTab $w={32} aria-label="新しいワークシート">
          <Icon size={16}><path d="M9 11.500H2.500v-10h10V8M5.500 9V6M7.500 9V4M9.500 9V5" /><path d="M12.500 8v8M9 12h7" strokeWidth={2} /></Icon>
        </BottomTab>
        <BottomTab $w={32} aria-label="新しいダッシュボード">
          <Icon size={16}><path d="M9 11.500H2.500v-10h10V8M7.500 1.500v10M2.500 6.500h10" /><path d="M12.500 8v8M9 12h7" strokeWidth={2} /></Icon>
        </BottomTab>
        <BottomTab $w={32} aria-label="新しいストーリー">
          <Icon size={16}><path d="M7.500 4L2.500 1.500v9l5 2.500V4l5-2.500V8" /><path d="M12.500 8v8M9 12h7" strokeWidth={2} /></Icon>
        </BottomTab>
        <BottomRest />
      </BottomBar>

      <ShowMe>
        <ShowMeTab>
          <svg width="15" height="16" viewBox="0 0 15 16" aria-hidden="true">
            <path d="M0 0h11v3H0z" fill="#85689a" />
            <path d="M0 4h14v3H0z" fill="#7c9fcb" />
            <path d="M0 8h5v3H0z" fill="#f2a072" />
            <path d="M0 12h8v3H0z" fill="#f76c7c" />
          </svg>
          表示形式
        </ShowMeTab>
        <ShowMePanel>
          <ThumbGrid>
            {drawings.map((d, i) => (
              <Thumb key={d.name} aria-label={d.name} $selected={d.name === "ガント ビュー"}>
                <Drawing col={i % 3} row={Math.floor(i / 3)}>{d.art}</Drawing>
              </Thumb>
            ))}
          </ThumbGrid>
          <Hint>ガント ビューの場合、次を試してください。</Hint>
          <Requirement $h={24} $gap={9}>1 個の日付 <Calendar color={INK} /></Requirement>
          <Requirement $h={24}>1 個以上の <Pill $w={83} $tone="#4996b2" $small>ディメンション</Pill></Requirement>
          <Requirement $h={32}>0 ～ 2 個の <Pill $w={60} $small>メジャー</Pill></Requirement>
        </ShowMePanel>
      </ShowMe>
    </App_>
  );
}
